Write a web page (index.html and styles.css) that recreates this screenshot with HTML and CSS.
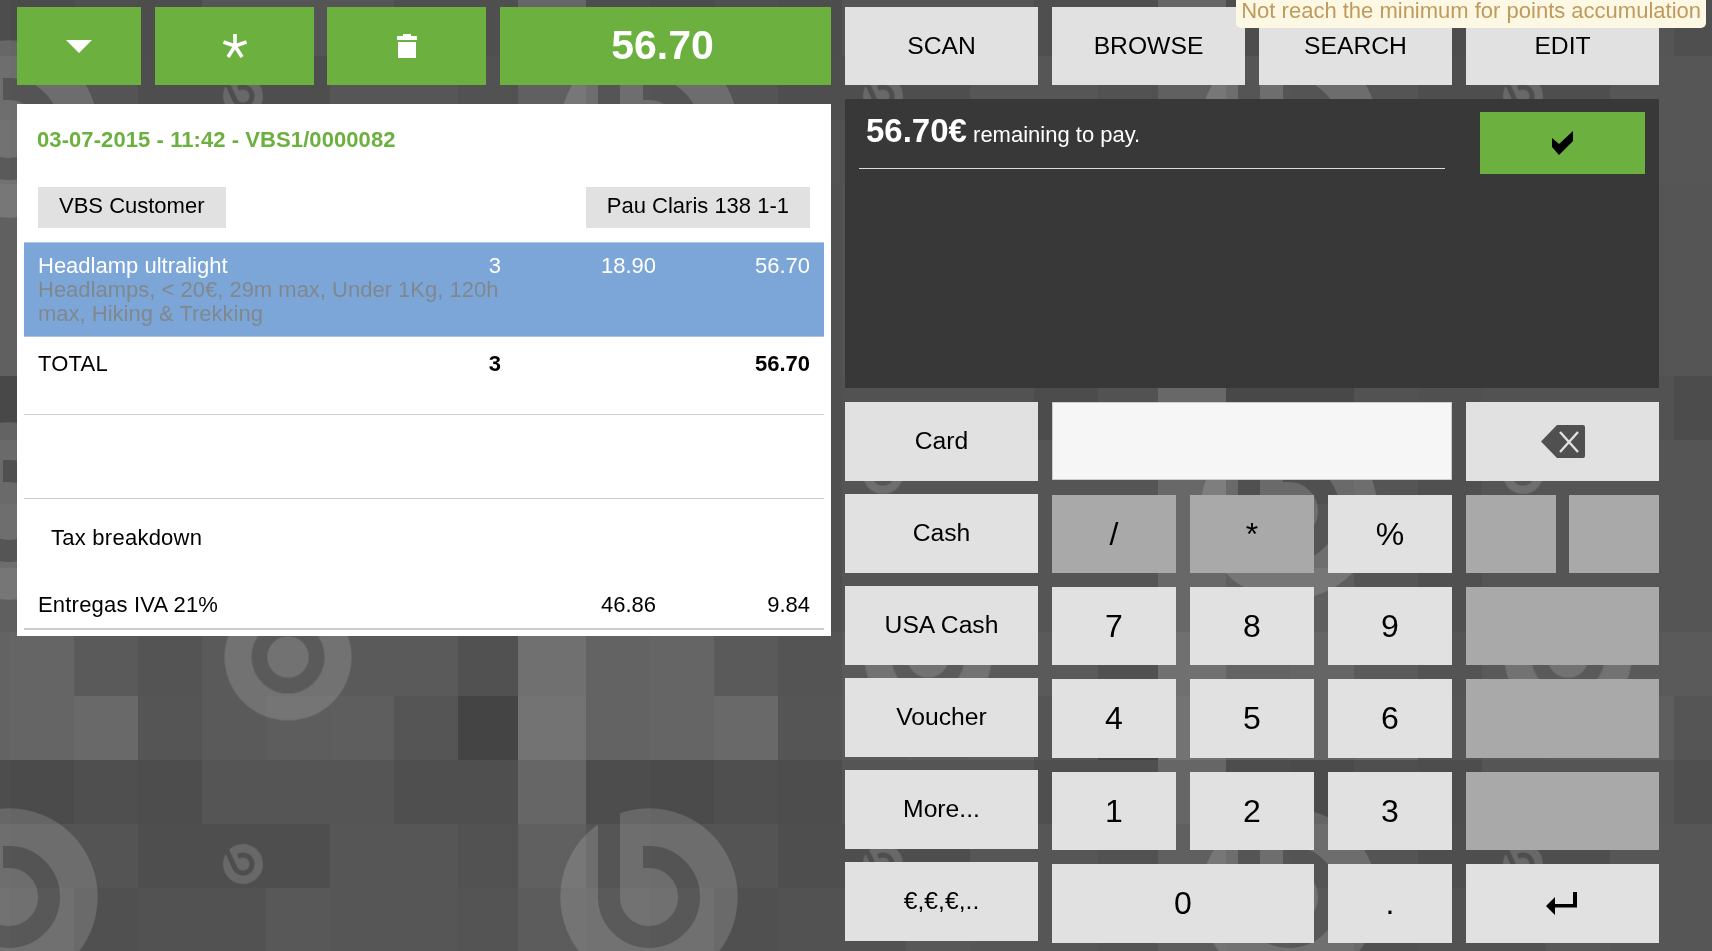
FILE: index.html
```html
<!DOCTYPE html>
<html lang="en">
  <head>
    <meta charset="UTF-8" />
    <meta name="viewport" content="width=device-width, initial-scale=1.0" />
    <title>Point of Sale</title>
    <link rel="stylesheet" href="styles.css">
  </head>
  <body>
    <svg class="wallpaper" width="1712" height="951" viewBox="0 0 1712 951" xmlns="http://www.w3.org/2000/svg" aria-hidden="true">
      <defs>
        <pattern id="tiles" x="10" y="56" width="640" height="768" patternUnits="userSpaceOnUse">
          <g shape-rendering="crispEdges">
            <!-- 56 -->
            <rect x="0" y="0" width="64" height="64" fill="#545454"/><rect x="64" y="0" width="64" height="64" fill="#545454"/><rect x="128" y="0" width="192" height="64" fill="#4e4e4e"/><rect x="320" y="0" width="128" height="64" fill="#565656"/><rect x="448" y="0" width="60" height="64" fill="#525252"/><rect x="508" y="0" width="68" height="64" fill="#606060"/><rect x="576" y="0" width="64" height="64" fill="#555555"/>
            <!-- 120 -->
            <rect x="0" y="64" width="64" height="64" fill="#585858"/><rect x="64" y="64" width="64" height="64" fill="#505050"/><rect x="128" y="64" width="128" height="64" fill="#525252"/><rect x="192" y="64" width="64" height="64" fill="#525252"/><rect x="256" y="64" width="64" height="64" fill="#585858"/><rect x="320" y="64" width="128" height="64" fill="#565656"/><rect x="448" y="64" width="60" height="64" fill="#545454"/><rect x="508" y="64" width="68" height="64" fill="#5c5c5c"/><rect x="576" y="64" width="64" height="64" fill="#5a5a5a"/>
            <!-- 184 to 568, mostly hidden behind the panels -->
            <rect x="0" y="128" width="640" height="128" fill="#555555"/><rect x="0" y="128" width="64" height="192" fill="#606060"/><rect x="576" y="128" width="64" height="192" fill="#606060"/>
            <rect x="0" y="320" width="640" height="64" fill="#525252"/><rect x="0" y="320" width="64" height="64" fill="#484848"/><rect x="576" y="320" width="64" height="64" fill="#484848"/><rect x="384" y="320" width="64" height="64" fill="#4c4c4c"/>
            <rect x="0" y="384" width="640" height="192" fill="#555555"/><rect x="0" y="384" width="64" height="64" fill="#505050"/><rect x="576" y="384" width="64" height="64" fill="#505050"/><rect x="0" y="512" width="64" height="64" fill="#5f5f5f"/><rect x="576" y="512" width="64" height="64" fill="#5f5f5f"/>
            <rect x="128" y="128" width="64" height="448" fill="#505050"/><rect x="508" y="128" width="68" height="448" fill="#686868"/>
            <!-- 632 -->
            <rect x="0" y="576" width="64" height="64" fill="#656565"/><rect x="64" y="576" width="64" height="64" fill="#5a5a5a"/><rect x="128" y="576" width="64" height="64" fill="#545454"/><rect x="192" y="576" width="256" height="64" fill="#5a5a5a"/><rect x="448" y="576" width="60" height="64" fill="#515151"/><rect x="508" y="576" width="68" height="64" fill="#707070"/><rect x="576" y="576" width="64" height="64" fill="#636363"/>
            <!-- 696 -->
            <rect x="0" y="640" width="64" height="64" fill="#656565"/><rect x="64" y="640" width="64" height="64" fill="#696969"/><rect x="128" y="640" width="64" height="64" fill="#555555"/><rect x="192" y="640" width="64" height="64" fill="#5a5a5a"/><rect x="256" y="640" width="64" height="64" fill="#5d5d5d"/><rect x="320" y="640" width="64" height="64" fill="#5e5e5e"/><rect x="384" y="640" width="64" height="64" fill="#555555"/><rect x="448" y="640" width="60" height="64" fill="#444444"/><rect x="508" y="640" width="68" height="64" fill="#737373"/><rect x="576" y="640" width="64" height="64" fill="#636363"/>
            <!-- 760 -->
            <rect x="0" y="704" width="64" height="64" fill="#4b4b4b"/><rect x="64" y="704" width="64" height="64" fill="#4f4f4f"/><rect x="128" y="704" width="64" height="64" fill="#4d4d4d"/><rect x="192" y="704" width="192" height="64" fill="#555555"/><rect x="384" y="704" width="124" height="64" fill="#4f4f4f"/><rect x="508" y="704" width="68" height="64" fill="#666666"/><rect x="576" y="704" width="64" height="64" fill="#4d4d4d"/>
          </g>
        </pattern>
        <mask id="logo-cut" maskUnits="userSpaceOnUse" x="-100" y="-100" width="200" height="200">
          <rect x="-100" y="-100" width="200" height="200" fill="#fff"/>
          <path d="M-6,-40 L0,-40 A40,40 0 1 1 -40,0 L-40,-100" fill="none" stroke="#000" stroke-width="22"/>
        </mask>
        <mask id="ring-cut" maskUnits="userSpaceOnUse" x="-100" y="-100" width="200" height="200">
          <rect x="-100" y="-100" width="200" height="200" fill="#fff"/>
          <circle r="40" fill="none" stroke="#000" stroke-width="22"/>
        </mask>
        <circle id="logo" r="88.7" fill="#fff" mask="url(#logo-cut)"/>
        <circle id="ring" r="88.7" fill="#fff" mask="url(#ring-cut)"/>
      </defs>
      <rect width="1712" height="951" fill="url(#tiles)"/>
      <g opacity="0.15">
        <use href="#logo" transform="translate(9 129)"/>
        <use href="#logo" transform="translate(649 129)"/>
        <use href="#logo" transform="translate(1289 129)"/>
        <use href="#logo" transform="translate(9 511)"/>
        <use href="#logo" transform="translate(649 511)"/>
        <use href="#logo" transform="translate(1289 511)"/>
        <use href="#logo" transform="translate(9 897)"/>
        <use href="#logo" transform="translate(649 897)"/>
        <use href="#logo" transform="translate(1289 897)"/>
        <use href="#logo" transform="translate(243 96) rotate(-25) scale(0.2255)"/>
        <use href="#logo" transform="translate(883 96) rotate(-25) scale(0.2255)"/>
        <use href="#logo" transform="translate(1523 96) rotate(-25) scale(0.2255)"/>
        <use href="#logo" transform="translate(243 864) rotate(-25) scale(0.2255)"/>
        <use href="#logo" transform="translate(883 864) rotate(-25) scale(0.2255)"/>
        <use href="#logo" transform="translate(1523 864) rotate(-25) scale(0.2255)"/>
        <use href="#ring" transform="translate(243 474) scale(0.2255)"/>
        <use href="#ring" transform="translate(883 474) scale(0.2255)"/>
        <use href="#ring" transform="translate(1523 474) scale(0.2255)"/>
        <use href="#ring" transform="translate(288 657) scale(0.716)"/>
        <use href="#ring" transform="translate(928 657) scale(0.716)"/>
        <use href="#ring" transform="translate(1568 657) scale(0.716)"/>
      </g>
    </svg>

    <div class="screen">
      <div class="left-col">
        <div class="actions">
          <button class="action action-menu">
            <svg width="26" height="13" viewBox="0 0 26 13"><polygon points="0,0 26,0 13,13" fill="#fff"/></svg>
          </button>
          <button class="action action-icon">
            <svg width="26" height="26" viewBox="0 0 26 26"><g stroke="#fff" stroke-width="3.6"><line x1="13" y1="13" x2="13" y2="1"/><line x1="13" y1="13" x2="24.5" y2="9"/><line x1="13" y1="13" x2="1.5" y2="9"/><line x1="13" y1="13" x2="20" y2="24"/><line x1="13" y1="13" x2="6" y2="24"/></g></svg>
          </button>
          <button class="action action-icon action-trash">
            <svg width="22" height="24" viewBox="0 0 22 24"><path d="M7,0 H15 V2 H21 V6 H1 V2 H7 Z M2,8 H20 V24 H2 Z" fill="#fff"/></svg>
          </button>
          <button class="action action-total">56.70</button>
        </div>

        <div class="order">
          <div class="order-title">03-07-2015 - 11:42 - VBS1/0000082</div>
          <div class="order-parties">
            <div class="party">VBS Customer</div>
            <div class="party">Pau Claris 138 1-1</div>
          </div>
          <div class="order-line selected">
            <div>Headlamp ultralight</div>
            <div class="num">3</div>
            <div class="num">18.90</div>
            <div class="num">56.70</div>
            <div class="line-desc">Headlamps, &lt; 20€, 29m max, Under 1Kg, 120h max, Hiking &amp; Trekking</div>
          </div>
          <div class="order-line order-total">
            <div class="spaced">TOTAL</div>
            <div class="num strong">3</div>
            <div class="num"></div>
            <div class="num strong">56.70</div>
          </div>
          <div class="order-spacer"></div>
          <div class="tax-title">Tax breakdown</div>
          <div class="order-line tax-line">
            <div class="spaced">Entregas IVA 21%</div>
            <div class="num"></div>
            <div class="num">46.86</div>
            <div class="num">9.84</div>
          </div>
        </div>
      </div>

      <div class="right-col">
        <div class="tooltip">Not reach the minimum for points accumulation</div>
        <div class="modes">
          <button class="key">SCAN</button>
          <button class="key">BROWSE</button>
          <button class="key">SEARCH</button>
          <button class="key">EDIT</button>
        </div>

        <div class="pay-panel">
          <div class="remaining"><b>56.70€</b> remaining to pay.</div>
          <button class="confirm">
            <svg width="21" height="24" viewBox="0 0 21 24"><polygon points="0,7 7,13 21,0 21,10 7,24 0,16" fill="#000"/></svg>
          </button>
        </div>

        <div class="keyboard">
          <div class="pay-methods">
            <button class="key">Card</button>
            <button class="key">Cash</button>
            <button class="key">USA Cash</button>
            <button class="key">Voucher</button>
            <button class="key">More...</button>
            <button class="key">€,€,€,..</button>
          </div>
          <div class="numpad">
            <input class="amount" type="text" />
            <button class="key span-2">
              <svg width="44" height="33" viewBox="0 0 44 33"><path d="M0,16.5 L16,0 H42 Q44,0 44,2 V31 Q44,33 42,33 H16 Z" fill="#505050"/><path d="M19,7 L37,27 M37,7 L19,27" stroke="#e1e1e1" stroke-width="2.4" fill="none"/></svg>
            </button>
            <button class="key digit off">/</button>
            <button class="key digit off">*</button>
            <button class="key digit">%</button>
            <button class="key off"></button>
            <button class="key off key-pull"></button>
            <button class="key digit">7</button>
            <button class="key digit">8</button>
            <button class="key digit">9</button>
            <button class="key off span-2"></button>
            <button class="key digit">4</button>
            <button class="key digit">5</button>
            <button class="key digit">6</button>
            <button class="key off span-2"></button>
            <button class="key digit">1</button>
            <button class="key digit">2</button>
            <button class="key digit">3</button>
            <button class="key off span-2"></button>
            <button class="key digit span-2">0</button>
            <button class="key digit">.</button>
            <button class="key span-2 key-enter">
              <svg width="31" height="23" viewBox="0 0 31 23"><path d="M27,0 H31 V15.5 H9 V23 L0,14 L9,5 V12 H27 Z" fill="#000"/></svg>
            </button>
          </div>
        </div>
      </div>
    </div>
  </body>
</html>
```

FILE: styles.css
```css
:root {
  --green: #6cb03f;
  --key-bg: #e1e1e1;
  --key-off: #a9a9a9;
  --dark-panel: #383838;
  --rule: #cccccc;
}

* {
  box-sizing: border-box;
}

html,
body {
  margin: 0;
  padding: 0;
}

body {
  width: 1712px;
  height: 951px;
  overflow: hidden;
  position: relative;
  background-color: #555555;
  font-family: "Liberation Sans", Arial, sans-serif;
  font-size: 22px;
  line-height: 24px;
  color: #000;
}

button {
  display: flex;
  align-items: center;
  justify-content: center;
  padding: 0;
  border: none;
  font-family: inherit;
  color: inherit;
}

.wallpaper {
  position: absolute;
  top: 0;
  left: 0;
}

.screen {
  position: relative;
  display: flex;
  gap: 14px;
  padding: 7px 0 0 17px;
}

.left-col,
.right-col {
  width: 814px;
}

.right-col {
  position: relative;
}

/* top bar */
.actions {
  display: flex;
  gap: 14px;
  height: 78px;
  margin-bottom: 19px;
}

.action {
  background-color: var(--green);
  color: #fff;
}

.action-menu {
  width: 124px;
}

.action-icon {
  width: 159px;
}

.action-trash {
  margin-left: -1px;
}

.action-total {
  flex-grow: 1;
  padding-right: 6px;
  padding-bottom: 2px;
  font-size: 41px;
  font-weight: bold;
}

/* order ticket */
.order {
  height: 532px;
  padding: 0 7px;
  background-color: #fff;
}

.order-title {
  padding: 24px 14px 0 13px;
  color: var(--green);
  font-weight: bold;
  letter-spacing: 0.08px;
}

.order-parties {
  display: flex;
  justify-content: space-between;
  margin-top: 35px;
  padding: 0 14px;
}

.party {
  height: 41px;
  line-height: 38px;
  padding: 0 21px;
  background-color: var(--key-bg);
}

.order-line {
  display: grid;
  grid-template-columns: 400px 63px 155px 154px;
  align-content: start;
  padding: 0 14px;
}

.num {
  text-align: right;
}

.strong {
  font-weight: bold;
}

.spaced {
  letter-spacing: 0.2px;
}

.selected {
  height: 95px;
  margin-top: 14px;
  padding-top: 11px;
  border-top: 1px solid #aec3dc;
  border-bottom: 1px solid #aec3dc;
  background-color: #7da6d8;
  color: #fff;
}

.line-desc {
  grid-column: 1 / span 2;
  color: #80888f;
}

.order-total {
  height: 78px;
  padding-top: 15px;
  border-bottom: 1px solid var(--rule);
}

.order-spacer {
  height: 84px;
  border-bottom: 1px solid var(--rule);
}

.tax-title {
  padding: 27px 0 0 27px;
  letter-spacing: 0.25px;
}

.tax-line {
  margin-top: 43px;
  padding-bottom: 11px;
  border-bottom: 2px solid var(--rule);
}

/* right side */
.tooltip {
  position: absolute;
  top: -7px;
  right: -47px;
  height: 28px;
  padding: 0 5px;
  line-height: 22px;
  font-size: 22px;
  white-space: nowrap;
  color: #c09a5c;
  background-color: #fdf8e3;
  border-radius: 0 0 5px 5px;
}

.modes {
  display: flex;
  gap: 14px;
  height: 78px;
}

.modes .key {
  width: 193px;
}

.key {
  padding-bottom: 1px;
  background-color: var(--key-bg);
  font-size: 24.7px;
}

.off {
  background-color: var(--key-off);
}

.digit {
  padding-bottom: 0;
  font-size: 32px;
}

.key-pull {
  margin-left: -1px;
}

.key-enter {
  padding-right: 2px;
}

.pay-panel {
  display: flex;
  justify-content: space-between;
  align-items: flex-start;
  height: 289px;
  margin-top: 14px;
  padding: 13px 14px 0;
  background-color: var(--dark-panel);
  color: #fff;
}

.remaining {
  width: 586px;
  height: 57px;
  padding: 7px 0 0 7px;
  border-bottom: 1px solid #dddddd;
}

.remaining b {
  font-size: 33px;
}

.confirm {
  width: 165px;
  height: 62px;
  background-color: var(--green);
}

.keyboard {
  display: flex;
  gap: 14px;
  margin-top: 14px;
}

.pay-methods {
  display: grid;
  grid-template-columns: 193px;
  grid-auto-rows: 79px;
  row-gap: 13px;
}

.numpad {
  display: grid;
  grid-template-columns: 124px 124px 124px 90px 89px;
  grid-template-rows: 79px 78px 78px 79px 78px 79px;
  gap: 14px;
}

.amount {
  grid-column: span 3;
  height: 78px;
  border: 1px solid var(--rule);
  background-color: #f6f6f6;
}

.span-2 {
  grid-column: span 2;
}
```
